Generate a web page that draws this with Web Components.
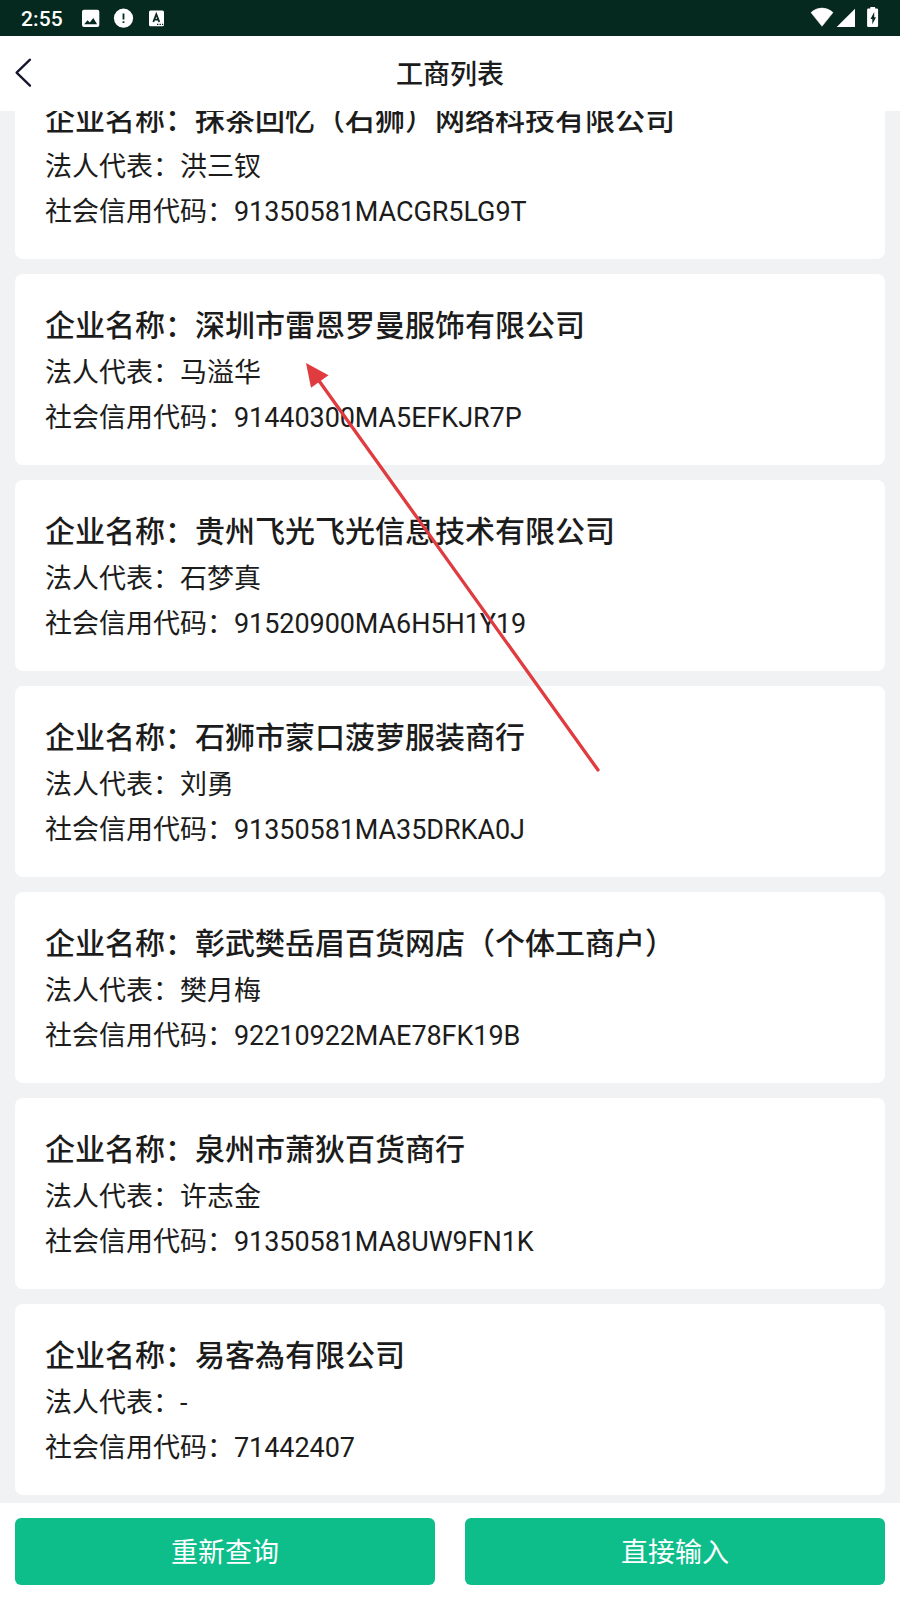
<!DOCTYPE html>
<html lang="zh-CN">
<head>
<meta charset="utf-8">
<meta name="viewport" content="width=device-width, initial-scale=1">
<title>工商列表</title>
<style>
  body {
    margin: 0;
    background: #f1f2f4;
    color: #1c1c1c;
    font-family: Roboto, "Noto Sans CJK SC", sans-serif;
  }
</style>
</head>
<body>
<company-app></company-app>

<script>
class StatusBar extends HTMLElement {
  constructor() {
    super();
    this.attachShadow({ mode: 'open' });
    this.shadowRoot.innerHTML = `
      <style>
        :host {
          display: flex;
          justify-content: space-between;
          flex: none;
          height: 36px;
          background: #05281f;
          color: #fff;
        }
        .left { display: flex; align-items: center; padding-left: 21px; }
        .time { width: 60px; font-size: 21px; line-height: 36px; font-weight: 500; letter-spacing: 0.1px; padding-top: 2px; }
        svg { display: block; }
      </style>
      <div class="left">
        <span class="time"><slot></slot></span>
        <svg width="86" height="36" viewBox="81 0 86 36">
          <rect x="82" y="9.7" width="17.3" height="17.3" rx="2" fill="#fff"/>
          <path d="M84.2 24.2l3.4-4 2.2 2.3 3.5-4.5 3.8 6.2z" fill="#05281f"/>
          <circle cx="123.5" cy="18.2" r="9.6" fill="#fff"/>
          <path d="M122.6 13.5h1.8v6h-1.8zM122.6 21.2h1.8v1.9h-1.8z" fill="#05281f"/>
          <rect x="149" y="10.4" width="15" height="15.8" rx="1.5" fill="#fff"/>
          <path d="M153.3 22l3-7.8 3 7.8M154.6 19.6h3.4" fill="none" stroke="#05281f" stroke-width="1.8"/>
          <path d="M157 23.7h1.4v1.4h-1.4zM159.5 23.7h1.4v1.4h-1.4zM162 23.7h1.2v1.4h-1.2z" fill="#05281f"/>
        </svg>
      </div>
      <svg width="90" height="36" viewBox="810 0 90 36" fill="#fff">
        <path d="M822 26.3L811 12.6Q815.5 8 822 8t11 4.6z" stroke="#fff" stroke-width=".5" stroke-linejoin="round"/>
        <path d="M855 8.8V27h-18.3z"/>
        <path d="M870.3 8.6V7h4.8v1.6h1.8q1.2 0 1.2 1.2v16q0 1.2-1.2 1.2h-8.6q-1.2 0-1.2-1.2v-16q0-1.2 1.2-1.2z"/>
        <path d="M874.2 12l-3.7 7.1h1.8v5.2l3.7-7h-1.8z" fill="#05281f"/>
      </svg>
    `;
  }
}

class NavHeader extends HTMLElement {
  constructor() {
    super();
    this.attachShadow({ mode: 'open' });
    this.shadowRoot.innerHTML = `
      <style>
        :host {
          display: grid;
          grid-template-columns: 60px 1fr 60px;
          align-items: center;
          flex: none;
          height: 75px;
          background: #fff;
        }
        svg { display: block; }
        h1 { margin: 0; padding-top: 2px; text-align: center; font-size: 27px; line-height: 40px; font-weight: 500; }
      </style>
      <svg width="60" height="75" viewBox="0 36 60 75">
        <path d="M30 59.7L16.6 72.7 30 85.7" fill="none" stroke="#15152f" stroke-width="2.3" stroke-linecap="round" stroke-linejoin="round"/>
      </svg>
      <h1><slot></slot></h1>
    `;
  }
}

class CompanyCard extends HTMLElement {
  constructor() {
    super();
    this.attachShadow({ mode: 'open' });
    this.shadowRoot.innerHTML = `
      <style>
        :host {
          display: block;
          box-sizing: border-box;
          flex: none;
          height: 191px;
          padding: 30px 30px 0;
          border-radius: 8px;
          background: #fff;
          white-space: nowrap;
        }
        h2 { margin: 0 0 3px; font-size: 30px; line-height: 44px; font-weight: 500; }
        p { margin: 0; font-size: 27px; line-height: 45px; }
        slot[name="code"] { letter-spacing: -0.07px; }
      </style>
      <h2>企业名称：<slot name="name"></slot></h2>
      <p>法人代表：<slot name="person"></slot></p>
      <p>社会信用代码：<slot name="code"></slot></p>
    `;
  }
}

class ActionButton extends HTMLElement {
  constructor() {
    super();
    this.attachShadow({ mode: 'open' });
    this.shadowRoot.innerHTML = `
      <style>
        :host { display: block; flex: 1; }
        button {
          display: block;
          width: 100%;
          height: 67px;
          padding: 0 0 2px;
          border: 0;
          border-radius: 6px;
          background: #0dbe8b;
          color: #fff;
          font: inherit;
          font-size: 27px;
        }
      </style>
      <button type="button"><slot></slot></button>
    `;
  }
}

// red pointer drawn over the list
class PointerArrow extends HTMLElement {
  constructor() {
    super();
    this.attachShadow({ mode: 'open' });
    this.shadowRoot.innerHTML = `
      <style>
        :host { position: absolute; left: 300px; top: 355px; pointer-events: none; }
        svg { display: block; }
      </style>
      <svg width="305" height="420" viewBox="300 355 305 420">
        <path d="M317 378L598 770" stroke="#e03c40" stroke-width="3.3" stroke-linecap="round"/>
        <path d="M306 363l22.5 12.3L311 387.8z" fill="#e03c40"/>
      </svg>
    `;
  }
}

class CompanyApp extends HTMLElement {
  constructor() {
    super();
    this.companies = [
      { name: '抹茶回忆（石狮）网络科技有限公司', person: '洪三钗', code: '91350581MACGR5LG9T' },
      { name: '深圳市雷恩罗曼服饰有限公司', person: '马溢华', code: '91440300MA5EFKJR7P' },
      { name: '贵州飞光飞光信息技术有限公司', person: '石梦真', code: '91520900MA6H5H1Y19' },
      { name: '石狮市蒙口菠萝服装商行', person: '刘勇', code: '91350581MA35DRKA0J' },
      { name: '彰武樊岳眉百货网店（个体工商户）', person: '樊月梅', code: '92210922MAE78FK19B' },
      { name: '泉州市萧狄百货商行', person: '许志金', code: '91350581MA8UW9FN1K' },
      { name: '易客為有限公司', person: '-', code: '71442407' },
    ];
    this.attachShadow({ mode: 'open' });
    this.render();
  }

  render() {
    this.shadowRoot.innerHTML = `
      <style>
        :host {
          display: flex;
          flex-direction: column;
          position: relative;
          height: 1600px;
          overflow: hidden;
        }
        /* the list is scrolled, so its end lines up with the footer */
        .list {
          display: flex;
          flex-direction: column;
          justify-content: flex-end;
          gap: 15px;
          flex: 1;
          min-height: 0;
          padding: 0 15px 8px;
          overflow: hidden;
        }
        footer {
          display: flex;
          gap: 30px;
          flex: none;
          box-sizing: border-box;
          height: 97px;
          padding: 15px;
          background: #fff;
        }
      </style>
      <status-bar>2:55</status-bar>
      <nav-header>工商列表</nav-header>
      <div class="list">
        ${this.companies.map(company => this.renderCompany(company)).join('')}
      </div>
      <footer>
        <action-button>重新查询</action-button>
        <action-button>直接输入</action-button>
      </footer>
      <pointer-arrow></pointer-arrow>
    `;
  }

  renderCompany(company) {
    return `
      <company-card>
        <span slot="name">${company.name}</span>
        <span slot="person">${company.person}</span>
        <span slot="code">${company.code}</span>
      </company-card>
    `;
  }
}

customElements.define('status-bar', StatusBar);
customElements.define('nav-header', NavHeader);
customElements.define('company-card', CompanyCard);
customElements.define('action-button', ActionButton);
customElements.define('pointer-arrow', PointerArrow);
customElements.define('company-app', CompanyApp);
</script>
</body>
</html>
